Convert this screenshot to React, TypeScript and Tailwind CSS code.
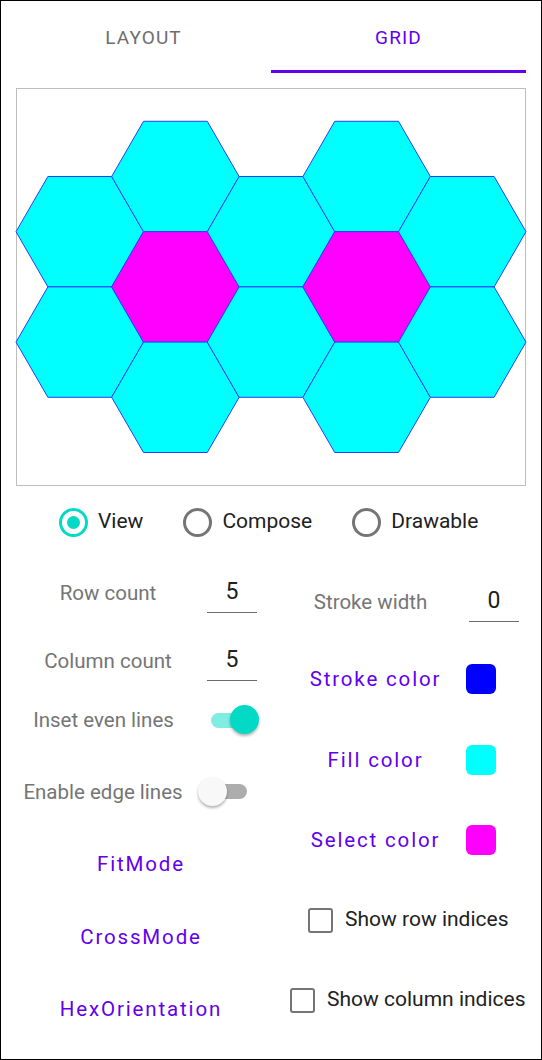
import React from "react";

const S = 63.75;

function hexPoints(cx: number, cy: number) {
  const pts: string[] = [];
  for (let i = 0; i < 6; i++) {
    const a = (Math.PI / 3) * i;
    pts.push(`${(cx + S * Math.cos(a)).toFixed(2)},${(cy + S * Math.sin(a)).toFixed(2)}`);
  }
  return pts.join(" ");
}

const cells: { cx: number; cy: number; sel: boolean }[] = [];
for (let c = 0; c < 5; c++) {
  const cx = 16 + S + c * 1.5 * S;
  if (c % 2 === 0) {
    [231.7, 342.1].forEach((cy) => cells.push({ cx, cy, sel: false }));
  } else {
    [176.5, 286.9, 397.3].forEach((cy, i) => cells.push({ cx, cy, sel: i === 1 }));
  }
}

function HexCanvas() {
  return (
    <div className="mx-[15px] mt-[15px] h-[398px] border border-[#bdbdbd]">
      <svg width="508" height="396" viewBox="17 89 508 396" className="block overflow-visible">
        {cells.map((h, i) => (
          <polygon
            key={i}
            points={hexPoints(h.cx, h.cy)}
            fill={h.sel ? "#ff00ff" : "#00ffff"}
            stroke="#2a3cff"
            strokeWidth="1"
          />
        ))}
      </svg>
    </div>
  );
}

function Radio({ label, checked }: { label: string; checked?: boolean }) {
  return (
    <div className="flex items-center gap-[10px]">
      <div
        className={`flex h-[29px] w-[29px] items-center justify-center rounded-full border-[3px] ${
          checked ? "border-[#03dac5]" : "border-[#757575]"
        }`}
      >
        {checked && <div className="h-[13px] w-[13px] rounded-full bg-[#03dac5]" />}
      </div>
      <span className="text-[21px] text-[#212121]">{label}</span>
    </div>
  );
}

function NumInput({ value }: { value: string }) {
  return (
    <div className="flex h-[40px] w-[50px] items-center justify-center border-b border-[#6b6b6b] text-[23px] text-[#212121]">
      {value}
    </div>
  );
}

function Swatch({ color }: { color: string }) {
  return <div className={`h-[30px] w-[30px] rounded-[6px] ${color}`} />;
}

function Check({ label }: { label: string }) {
  return (
    <div className="flex items-center gap-[12px]">
      <div className="h-[25px] w-[25px] rounded-[3px] border-[2.5px] border-[#757575]" />
      <span className="text-[21px] text-[#212121]">{label}</span>
    </div>
  );
}

const gray = "text-[20.5px] text-[#757575] text-center";
const purple = "text-[20.5px] tracking-[0.09em] text-[#6200ee] text-center";

export default function App() {
  return (
    <div className="h-[1060px] w-[542px] border border-black bg-white font-['Roboto',sans-serif]">
      {/* tabs */}
      <div className="flex px-[15px]">
        <div className="flex h-[72px] w-[255px] flex-col">
          <div className="flex flex-1 items-center justify-center pt-[5px] text-[19px] tracking-[0.06em] text-[#6e6e6e]">
            LAYOUT
          </div>
          <div className="h-[3px]" />
        </div>
        <div className="flex h-[72px] w-[255px] flex-col">
          <div className="flex flex-1 items-center justify-center pt-[5px] text-[19px] tracking-[0.06em] text-[#6200ee]">
            GRID
          </div>
          <div className="h-[3px] bg-[#6200ee]" />
        </div>
      </div>

      <HexCanvas />

      <div className="mt-[12px] flex h-[48px] items-center gap-[40px] pl-[58px]">
        <Radio label="View" checked />
        <Radio label="Compose" />
        <Radio label="Drawable" />
      </div>

      <div className="flex">
        {/* left column */}
        <div className="flex w-[270px] flex-col">
          <div className="mt-[23px] flex h-12 items-center">
            <div className={`ml-[15px] w-[184px] ${gray}`}>Row count</div>
            <div className="ml-[7px]">
              <NumInput value="5" />
            </div>
          </div>
          <div className="mt-[20px] flex h-12 items-center">
            <div className={`ml-[15px] w-[184px] ${gray}`}>Column count</div>
            <div className="ml-[7px]">
              <NumInput value="5" />
            </div>
          </div>
          <div className="mt-[11px] flex h-12 items-center">
            <div className={`ml-[15px] w-[175px] ${gray}`}>Inset even lines</div>
            <div className="relative ml-[20px] h-[30px] w-[48px]">
              <div className="absolute left-0 top-[8px] h-[15px] w-[40px] rounded-full bg-[#81ece2]" />
              <div className="absolute right-0 top-0 h-[29px] w-[29px] rounded-full bg-[#03dac5] shadow-[0_2px_3px_rgba(0,0,0,0.3)]" />
            </div>
          </div>
          <div className="mt-[24px] flex h-12 items-center">
            <div className={`ml-[15px] w-[174px] ${gray}`}>Enable edge lines</div>
            <div className="relative ml-[8px] h-[30px] w-[50px]">
              <div className="absolute left-[9px] top-[7px] h-[15px] w-[40px] rounded-full bg-[#adadad]" />
              <div className="absolute left-0 top-0 h-[29px] w-[29px] rounded-full bg-[#f8f8f8] shadow-[0_2px_3px_rgba(0,0,0,0.3)]" />
            </div>
          </div>
          <div className="mt-[24px] flex h-12 items-center">
            <div className={`ml-[15px] w-[250px] ${purple}`}>FitMode</div>
          </div>
          <div className="mt-[25px] flex h-12 items-center">
            <div className={`ml-[15px] w-[250px] ${purple}`}>CrossMode</div>
          </div>
          <div className="mt-[24px] flex h-12 items-center">
            <div className={`ml-[15px] w-[250px] ${purple}`}>HexOrientation</div>
          </div>
        </div>

        {/* right column */}
        <div className="flex w-[270px] flex-col">
          <div className="mt-[32px] flex h-12 items-center">
            <div className={`ml-[15px] w-[169px] ${gray}`}>Stroke width</div>
            <div className="ml-[14px]">
              <NumInput value="0" />
            </div>
          </div>
          <div className="mt-[29px] flex h-12 items-center">
            <div className={`ml-[15px] w-[179px] ${purple}`}>Stroke color</div>
            <div className="ml-[1px]">
              <Swatch color="bg-[#0000ff]" />
            </div>
          </div>
          <div className="mt-[33px] flex h-12 items-center">
            <div className={`ml-[15px] w-[179px] ${purple}`}>Fill color</div>
            <div className="ml-[1px]">
              <Swatch color="bg-[#00ffff]" />
            </div>
          </div>
          <div className="mt-[32px] flex h-12 items-center">
            <div className={`ml-[15px] w-[179px] ${purple}`}>Select color</div>
            <div className="ml-[1px]">
              <Swatch color="bg-[#ff00ff]" />
            </div>
          </div>
          <div className="mt-[32px] flex h-12 items-center pl-[37px]">
            <Check label="Show row indices" />
          </div>
          <div className="mt-[32px] flex h-12 items-center pl-[19px]">
            <Check label="Show column indices" />
          </div>
        </div>
      </div>
    </div>
  );
}
